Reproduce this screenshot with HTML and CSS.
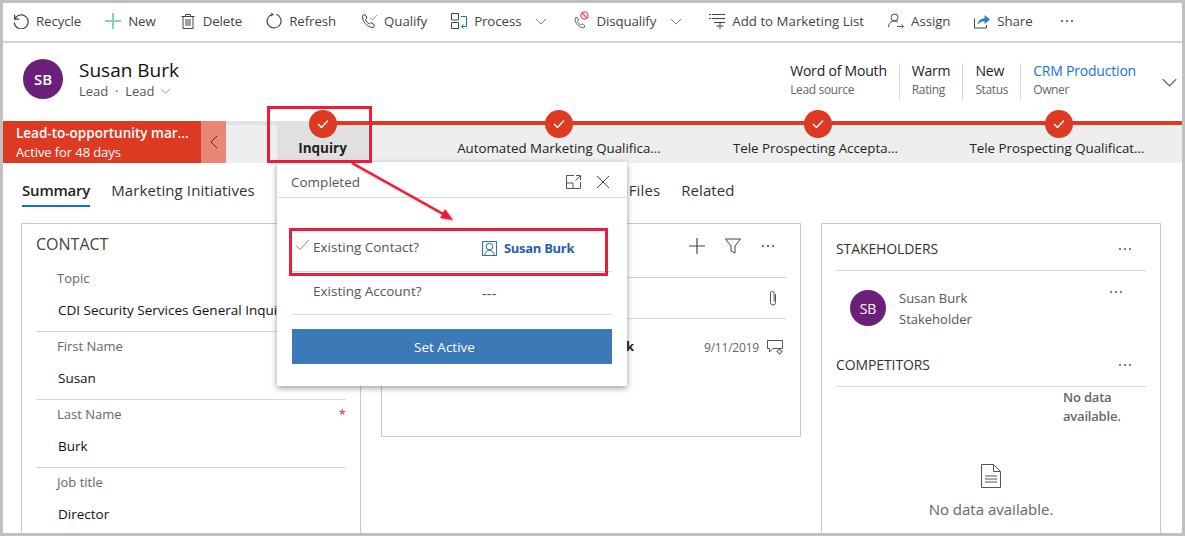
FILE: index.html
```html
<!DOCTYPE html>
<html lang="en">
<head>
    <meta charset="UTF-8">
    <meta name="viewport" content="width=device-width, initial-scale=1.0">
    <title>Susan Burk - Lead</title>
    <link rel="stylesheet" href="styles.css">
</head>
<body>
    <svg class="sprite" aria-hidden="true">
        <symbol id="chevron" viewBox="0 0 14 8"><path d="M1 1l6 6 6-6" fill="none" stroke="currentColor"/></symbol>
        <symbol id="dots" viewBox="0 0 14 4"><g fill="currentColor"><circle cx="2" cy="2" r="1"/><circle cx="7" cy="2" r="1"/><circle cx="12" cy="2" r="1"/></g></symbol>
        <symbol id="check" viewBox="0 0 12 10"><path d="M1 5l3.5 3.5L11 1.5" fill="none" stroke="currentColor" stroke-width="1.4"/></symbol>
        <symbol id="phone" viewBox="0 0 16 16"><path d="M2.5 2.5L5 1.5l2 3.5-1.5 1.5c.6 2 2 3.5 4 4.5L11 9.5l3.5 2.5-1 2.5C8 15 2 9 2.5 2.5z" fill="none" stroke="#444"/></symbol>
    </svg>

    <div class="frame">
        <!-- Command bar -->
        <div class="toolbar">
            <div class="tool"><svg class="icon" viewBox="0 0 16 16" fill="none" stroke="#444" stroke-width="1.2"><path d="M1.6 1.6v4.6h4.6M1.8 6A7 7 0 1 1 1.2 9.5"/></svg>Recycle</div>
            <div class="tool"><svg class="icon" viewBox="0 0 16 16" fill="none" stroke="#8ed1a6" stroke-width="2"><path d="M8 0v16M0 8h16"/></svg>New</div>
            <div class="tool"><svg class="icon" viewBox="0 0 16 16" fill="none" stroke="#444"><path d="M1.5 3.5h13M5.5 3.5V1.5h5v2M3 3.5v12h10v-12M6 6v7M8 6v7M10 6v7"/></svg>Delete</div>
            <div class="tool"><svg class="icon" viewBox="0 0 16 16" fill="none" stroke="#444" stroke-width="1.2"><path d="M10.2 1.3A7 7 0 1 1 5 1.7M5.2 0l1.6 1.6-2.2 1.4"/></svg>Refresh</div>
            <div class="tool tool-qualify">
                <span class="icon-stack"><svg class="icon" viewBox="0 0 16 16"><use href="#phone"/></svg><svg class="badge-check" viewBox="0 0 12 10"><use href="#check"/></svg></span>Qualify
            </div>
            <div class="tool tool-menu">
                <svg class="icon" viewBox="0 0 16 16" fill="none"><path d="M.5.5h7v6.5h-7zM.5 9.500h7v6h-7z" stroke="#444"/><path d="M10 3.500h5.500v10H10.500M12.500 11.500l-2 2 2 2" stroke="#1f6fb5"/></svg>Process
            </div>
            <svg class="caret" viewBox="0 0 14 8"><use href="#chevron"/></svg>
            <div class="tool tool-menu tool-after-caret">
                <span class="icon-stack"><svg class="icon icon-phone-small" viewBox="0 0 16 16"><use href="#phone"/></svg><svg class="badge-no" viewBox="0 0 10 10" fill="none" stroke="#e0555f" stroke-width="1.5"><circle cx="5" cy="5" r="4"/><path d="M2 2l6 6"/></svg></span>Disqualify
            </div>
            <svg class="caret" viewBox="0 0 14 8"><use href="#chevron"/></svg>
            <div class="tool tool-after-caret tool-list"><svg class="icon" viewBox="0 0 16 16" fill="none" stroke="#444"><path d="M0 1.500h2M3 1.500h13M0 5.500h2M3 5.500h13M5 9.500h11M11 9v7M7.500 13h7"/></svg>Add to Marketing List</div>
            <div class="tool"><svg class="icon" viewBox="0 0 16 16" fill="none"><circle cx="6.500" cy="4.500" r="3.500" stroke="#444"/><path d="M.5 14c0-3.500 2.500-6 6-6 1.500 0 2.500.4 3.500 1.200" stroke="#444"/><path d="M9 13.500h6.500M13.500 11.500l2 2-2 2" stroke="#1f6fb5"/></svg>Assign</div>
            <div class="tool"><svg class="icon" viewBox="0 0 16 16"><path d="M.5 5.500v9.500h12v-3" fill="none" stroke="#444"/><path d="M3.500 12c.5-4 3-6.500 7-6.500V2L16 6.500 10.500 11V8.300C7.500 8.300 5.500 9.500 3.500 12z" fill="#2f7fc6"/></svg>Share</div>
            <svg class="tool-dots" viewBox="0 0 14 4"><use href="#dots"/></svg>
        </div>

        <!-- Record header -->
        <div class="record-header">
            <div class="avatar avatar-large">SB</div>
            <div class="record-title">
                <h1>Susan Burk</h1>
                <p>Lead &nbsp;&middot;&nbsp; Lead <svg class="title-caret" viewBox="0 0 14 8"><use href="#chevron"/></svg></p>
            </div>
            <div class="summary">
                <div class="summary-item"><strong>Word of Mouth</strong><span>Lead source</span></div>
                <div class="summary-item"><strong>Warm</strong><span>Rating</span></div>
                <div class="summary-item"><strong>New</strong><span>Status</span></div>
                <div class="summary-item"><strong class="link">CRM Production</strong><span>Owner</span></div>
            </div>
            <svg class="header-caret" viewBox="0 0 14 8"><use href="#chevron"/></svg>
        </div>

        <!-- Business process flow -->
        <div class="process">
            <div class="process-name">
                <strong>Lead-to-opportunity mar...</strong>
                <span>Active for 48 days</span>
            </div>
            <div class="process-toggle"><svg viewBox="0 0 8 14" fill="none" stroke="#333"><path d="M7 1L1 7l6 6"/></svg></div>
            <div class="stages">
                <div class="stage stage-active">
                    <div class="stage-dot"><svg viewBox="0 0 12 10"><use href="#check"/></svg></div>
                    <div class="stage-label">Inquiry</div>
                </div>
                <div class="stage stage-second">
                    <div class="stage-dot"><svg viewBox="0 0 12 10"><use href="#check"/></svg></div>
                    <div class="stage-label">Automated Marketing Qualifica...</div>
                </div>
                <div class="stage stage-third">
                    <div class="stage-dot"><svg viewBox="0 0 12 10"><use href="#check"/></svg></div>
                    <div class="stage-label">Tele Prospecting Accepta...</div>
                </div>
                <div class="stage stage-fourth">
                    <div class="stage-dot"><svg viewBox="0 0 12 10"><use href="#check"/></svg></div>
                    <div class="stage-label">Tele Prospecting Qualificat...</div>
                </div>
            </div>
        </div>

        <!-- Tabs -->
        <div class="tabs">
            <div class="tab tab-active">Summary</div>
            <div class="tab">Marketing Initiatives</div>
            <div class="tab tab-files">Files</div>
            <div class="tab">Related</div>
        </div>

        <div class="content">
            <div class="card card-contact">
                <h2>CONTACT</h2>
                <div class="field"><label>Topic</label><div class="value">CDI Security Services General Inquiry</div></div>
                <div class="field"><label>First Name</label><div class="value">Susan</div></div>
                <div class="field"><label>Last Name <span class="required">*</span></label><div class="value">Burk</div></div>
                <div class="field"><label>Job title</label><div class="value">Director</div></div>
            </div>

            <div class="card card-timeline">
                <div class="timeline-head">
                    <svg class="timeline-plus" viewBox="0 0 16 16" fill="none" stroke="#444" stroke-width="1.2"><path d="M8 0v16M0 8h16"/></svg>
                    <svg class="timeline-filter" viewBox="0 0 16 16" fill="none" stroke="#444"><path d="M.5 1h15L10 8v7l-4-2V8z"/></svg>
                    <svg class="timeline-dots" viewBox="0 0 14 4"><use href="#dots"/></svg>
                </div>
                <div class="timeline-note">
                    <svg class="clip" viewBox="0 0 10 16" fill="none" stroke="#555"><path d="M7.500 4v8.500a2.500 2.500 0 0 1-5 0V3a1.800 1.800 0 0 1 3.600 0v8.500"/></svg>
                </div>
                <div class="timeline-row">
                    <span class="timeline-name">Susan Burk</span>
                    <span class="timeline-date">9/11/2019</span>
                    <svg class="comment" viewBox="0 0 16 15" fill="none" stroke="#555"><path d="M.5.500h15v8H6L2.500 12V8.500H.5z"/><circle cx="12.500" cy="11.500" r="2" fill="#fff"/><path d="M12.500 8.500v1M12.500 13.500v1M9.500 11.500h1M14.500 11.500h1"/></svg>
                </div>
            </div>

            <div class="card card-side">
                <div class="side-head"><h3>STAKEHOLDERS</h3><svg class="side-dots" viewBox="0 0 14 4"><use href="#dots"/></svg></div>
                <div class="person">
                    <div class="avatar avatar-small">SB</div>
                    <div class="person-text"><div>Susan Burk</div><div>Stakeholder</div></div>
                    <svg class="person-dots" viewBox="0 0 14 4"><use href="#dots"/></svg>
                </div>
                <div class="side-head side-head-second"><h3>COMPETITORS</h3><svg class="side-dots" viewBox="0 0 14 4"><use href="#dots"/></svg></div>
                <div class="no-data-small">No data available.</div>
                <div class="no-data">
                    <svg viewBox="0 0 20 24" fill="none" stroke="#555"><path d="M.5.5h12l7 7v16H.5zM12.500.5v7h7M4 12h12M4 15h12M4 18h12"/></svg>
                    <div>No data available.</div>
                </div>
            </div>
        </div>

        <!-- Stage flyout -->
        <div class="flyout">
            <div class="flyout-head">
                <span>Completed</span>
                <svg class="flyout-expand" viewBox="0 0 15 14" fill="none" stroke="#555"><path d="M8 .5H.5v13h14V7M.5 8h6.500v5.500M9.500 5.500L14 1M10 .5h4.500V5"/></svg>
                <svg class="flyout-close" viewBox="0 0 14 14" fill="none" stroke="#444"><path d="M1 1l12 12M13 1L1 13"/></svg>
            </div>
            <div class="flyout-body">
                <div class="step">
                    <svg class="step-check" viewBox="0 0 15 12" fill="none" stroke="#5aa54b"><path d="M1 6.500l4 4L14 1"/></svg>
                    <span class="step-label">Existing Contact?</span>
                    <span class="step-value step-link"><svg viewBox="0 0 16 16" fill="none" stroke="#1f5fae"><path d="M.5.500h15v15H.5z"/><circle cx="8" cy="6" r="3.500"/><path d="M3 15.500c0-3.500 2-5.500 5-5.500s5 2 5 5.500"/></svg>Susan Burk</span>
                </div>
                <div class="step">
                    <span></span>
                    <span class="step-label">Existing Account?</span>
                    <span class="step-value step-empty">---</span>
                </div>
                <button class="set-active" type="button">Set Active</button>
            </div>
            <div class="callout-field"></div>
        </div>

        <!-- Annotations drawn on top of the screenshot -->
        <div class="callout-stage"></div>
        <svg class="callout-arrow" viewBox="0 0 1179 530" fill="none">
            <path d="M349 160L442 212" stroke="#ee1c3c" stroke-width="2.500"/>
            <path d="M450 217L437 215L442 206z" fill="#ee1c3c"/>
        </svg>
    </div>
</body>
</html>
```

FILE: styles.css
```css
* {
    box-sizing: border-box;
}

body {
    margin: 0;
    font-family: "Open Sans", Arial, sans-serif;
    font-size: 13px;
    color: #222;
    background-color: #fff;
}

.sprite {
    display: none;
}

.frame {
    position: relative;
    width: 1185px;
    height: 536px;
    border: 3px solid #c0c0c0;
    overflow: hidden;
    background-color: #fff;
}

/* Command bar */
.toolbar {
    display: flex;
    align-items: center;
    gap: 24px;
    height: 40px;
    padding-left: 10px;
    padding-bottom: 2px;
    border-bottom: 2px solid #d4d4d4;
    color: #444;
    font-size: 13.3px;
    letter-spacing: -0.1px;
    white-space: nowrap;
}

.tool {
    display: flex;
    align-items: center;
    gap: 7px;
}

.tool-qualify .icon-stack {
    margin-right: 1px;
}

.tool-menu {
    margin-right: -10px;
}

.tool-after-caret {
    margin-left: 2px;
}

.tool-list {
    margin-left: 3px;
    letter-spacing: 0;
}

.icon {
    width: 16px;
    height: 16px;
    flex: none;
}

.icon-stack {
    position: relative;
    display: block;
    width: 16px;
    height: 16px;
}

.icon-phone-small {
    width: 13px;
    height: 13px;
    margin-top: 3px;
}

.badge-check {
    position: absolute;
    top: 1px;
    right: -2px;
    width: 9px;
    height: 7px;
    color: #52b788;
}

.badge-no {
    position: absolute;
    top: -2px;
    right: 0;
    width: 9px;
    height: 9px;
    background-color: #fff;
    border-radius: 50%;
}

.caret {
    width: 12px;
    height: 7px;
    color: #666;
}

.tool-dots {
    width: 14px;
    height: 4px;
    margin-left: 3px;
    color: #444;
}

/* Record header */
.record-header {
    display: flex;
    height: 78px;
    padding: 16px 0 0 20px;
}

.avatar {
    display: flex;
    align-items: center;
    justify-content: center;
    flex: none;
    border-radius: 50%;
    background-color: #6b1f7b;
    color: #fff;
    font-weight: 600;
}

.avatar-large {
    width: 40px;
    height: 40px;
    font-size: 15px;
}

.avatar-small {
    width: 36px;
    height: 36px;
    font-size: 14px;
    font-weight: 400;
}

.record-title {
    margin-left: 16px;
}

.record-title h1 {
    margin: 0;
    font-size: 19px;
    font-weight: 400;
    line-height: 22px;
    color: #111;
}

.record-title p {
    margin: 0;
    line-height: 20px;
    color: #555;
}

.title-caret {
    width: 11px;
    height: 6px;
    margin-left: 2px;
    vertical-align: 2px;
    color: #666;
}

.summary {
    display: flex;
    height: 37px;
    margin-top: 4px;
    margin-left: auto;
}

.summary-item {
    display: flex;
    flex-direction: column;
    padding: 0 12px;
    border-left: 1px solid #d8d8d8;
}

.summary-item:first-child {
    border-left: none;
}

.summary-item strong {
    font-size: 14px;
    font-weight: 500;
    line-height: 18px;
    margin-top: -1px;
    color: #222;
    letter-spacing: -0.2px;
}

.summary-item strong.link {
    color: #1673e6;
}

.summary-item span {
    font-size: 12px;
    line-height: 20px;
    color: #666;
    letter-spacing: -0.35px;
}

.header-caret {
    width: 17px;
    height: 9px;
    margin: 19px 4px 0 13px;
    color: #555;
}

/* Business process flow */
.process {
    display: flex;
    height: 42px;
}

.process-name {
    display: flex;
    flex-direction: column;
    width: 198px;
    padding: 2px 0 0 13px;
    background-color: #dd3a24;
    color: #fff;
    white-space: nowrap;
}

.process-name strong {
    font-size: 13.5px;
    line-height: 20px;
    font-weight: 600;
}

.process-name span {
    line-height: 18px;
    letter-spacing: -0.1px;
}

.process-toggle {
    display: flex;
    align-items: center;
    justify-content: center;
    width: 25px;
    background-color: #ea8675;
}

.process-toggle svg {
    width: 8px;
    height: 14px;
}

.stages {
    position: relative;
    display: flex;
    flex: 1;
    padding-left: 51px;
    border-top: 4px solid #e2e2e2;
    background-color: #eee;
}

.stages::before {
    content: "";
    position: absolute;
    top: -4px;
    left: 96px;
    right: 0;
    height: 4px;
    background-color: #dd3a24;
}

.stage {
    display: flex;
    flex-direction: column;
    align-items: center;
    width: 240px;
    font-size: 13.3px;
    white-space: nowrap;
}

.stage-active {
    width: 91px;
    background-color: #e0e0e0;
    font-size: 13.5px;
    font-weight: 700;
    color: #222;
}

.stage-second {
    margin-left: 71px;
}

.stage-third {
    margin-left: 19px;
}

.stage-third .stage-label {
    margin-left: -5px;
}

.stage-fourth {
    margin-left: 1px;
}

.stage-fourth .stage-label {
    margin-left: -4px;
}

.stage-dot {
    position: relative;
    display: flex;
    align-items: center;
    justify-content: center;
    flex: none;
    width: 28px;
    height: 28px;
    margin-top: -15px;
    border-radius: 50%;
    background-color: #dd3a24;
    color: #fff;
}

.stage-dot svg {
    width: 12px;
    height: 10px;
}

.stage-label {
    line-height: 20px;
}

/* Tabs */
.tabs {
    display: flex;
    gap: 21px;
    height: 60px;
    padding: 16px 0 0 19px;
    font-size: 15px;
    color: #333;
}

.tab {
    height: 28px;
    line-height: 22px;
    letter-spacing: 0.1px;
}

.tab-active {
    border-bottom: 2px solid #0f6fde;
    font-weight: 600;
    color: #222;
    letter-spacing: -0.2px;
}

.tab-files {
    margin-left: 353px;
}

/* Cards */
.content {
    display: flex;
    align-items: flex-start;
    gap: 20px;
    padding-left: 18px;
}

.card {
    flex: none;
    border: 1px solid #c8c8c8;
    padding: 0 14px;
    background-color: #fff;
}

.card-contact {
    width: 340px;
    height: 330px;
}

.card-contact h2 {
    margin: 0;
    padding: 9px 0;
    font-size: 16px;
    font-weight: 400;
    line-height: 22px;
    color: #444;
}

.field {
    position: relative;
    padding-left: 21px;
    border-bottom: 1px solid #d8d8d8;
    height: 68px;
}

.field label {
    display: block;
    height: 28px;
    line-height: 28px;
    color: #666;
}

.required {
    position: absolute;
    top: 0;
    right: 0;
    color: #e0203a;
}

.value {
    height: 36px;
    padding-left: 1px;
    line-height: 36px;
    font-size: 13.5px;
    font-weight: 500;
    color: #111;
    white-space: nowrap;
}

.card-timeline {
    width: 420px;
    height: 214px;
}

.timeline-head {
    position: relative;
    display: flex;
    align-items: center;
    justify-content: flex-end;
    height: 54px;
    border-bottom: 1px solid #d0d0d0;
    padding-bottom: 10px;
}

.timeline-plus {
    width: 16px;
    height: 16px;
    margin-right: 20px;
}

.timeline-filter {
    width: 16px;
    height: 16px;
    margin-right: 20px;
}

.timeline-dots {
    width: 14px;
    height: 4px;
    margin-right: 11px;
    color: #444;
}

.timeline-note {
    display: flex;
    align-items: center;
    justify-content: flex-end;
    height: 41px;
    padding-right: 8px;
    border-bottom: 1px solid #d8d8d8;
}

.clip {
    width: 10px;
    height: 16px;
}

.timeline-row {
    display: flex;
    align-items: center;
    height: 56px;
    padding-left: 165px;
}

.timeline-name {
    margin-top: -2px;
    font-weight: 700;
}

.timeline-date {
    margin-left: auto;
    font-size: 12px;
    color: #666;
    letter-spacing: -0.2px;
}

.comment {
    width: 16px;
    height: 15px;
    margin: 0 3px 0 8px;
}

.card-side {
    width: 340px;
    height: 330px;
}

.side-head {
    display: flex;
    align-items: center;
    justify-content: space-between;
    height: 47px;
    padding: 3px 14px 0 0;
    border-bottom: 1px solid #d8d8d8;
}

.side-head-second {
    height: 44px;
    padding-top: 0;
}

.side-head h3 {
    margin: 0;
    font-size: 14px;
    font-weight: 500;
    color: #333;
    letter-spacing: -0.1px;
}

.side-dots {
    width: 14px;
    height: 4px;
    color: #555;
}

.person {
    position: relative;
    display: flex;
    height: 72px;
    padding: 19px 0 0 14px;
}

.person-text {
    margin: -2px 0 0 13px;
    line-height: 21px;
    color: #555;
}

.person-dots {
    position: absolute;
    top: 19px;
    right: 23px;
    width: 14px;
    height: 4px;
    color: #555;
}

.no-data-small {
    width: 70px;
    margin: 1px 0 0 227px;
    line-height: 19px;
    font-weight: 600;
    color: #666;
    letter-spacing: -0.2px;
}

.no-data {
    display: flex;
    flex-direction: column;
    align-items: center;
    margin-top: 38px;
    font-size: 15px;
    color: #666;
}

.no-data svg {
    width: 20px;
    height: 24px;
    margin-bottom: 11px;
}

/* Stage flyout */
.flyout {
    position: absolute;
    top: 159px;
    left: 274px;
    width: 350px;
    height: 224px;
    background-color: #fff;
    box-shadow: 0 2px 6px rgba(0, 0, 0, 0.4);
}

.flyout-head {
    display: flex;
    align-items: center;
    height: 36px;
    margin: 0 1px;
    padding: 4px 16px 0 13px;
    border-bottom: 1px solid #d8d8d8;
    color: #555;
    font-size: 13.5px;
}

.flyout-expand {
    width: 15px;
    height: 14px;
    margin-left: auto;
}

.flyout-close {
    width: 14px;
    height: 14px;
    margin-left: 15px;
}

.flyout-body {
    padding: 30px 15px 0;
}

.step {
    display: grid;
    grid-template-columns: 21px 169px 1fr;
    height: 44px;
    padding-top: 8px;
    border-bottom: 1px solid #d8d8d8;
    line-height: 22px;
}

.step + .step {
    height: 43px;
}

.step-check {
    width: 15px;
    height: 12px;
    margin: 3px 0 0 3px;
}

.step-label {
    font-size: 13.5px;
    color: #555;
}

.step-value {
    display: flex;
    align-items: center;
    height: 24px;
    color: #555;
}

.step-empty {
    padding-top: 2px;
    font-size: 15px;
}

.step-link {
    gap: 7px;
    font-weight: 700;
    color: #1f5fae;
    letter-spacing: -0.3px;
}

.step-link svg {
    width: 15px;
    height: 15px;
}

.set-active {
    display: block;
    width: 100%;
    height: 35px;
    margin-top: 14px;
    padding-right: 21px;
    border: none;
    background-color: #3b79b7;
    color: #fff;
    font-family: inherit;
    font-size: 13.5px;
    cursor: pointer;
}

/* Red annotations */
.callout-stage {
    position: absolute;
    top: 103px;
    left: 264px;
    width: 105px;
    height: 57px;
    border: 3px solid #ee1c3c;
}

.callout-field {
    position: absolute;
    top: 66px;
    left: 12px;
    width: 319px;
    height: 48px;
    border: 3px solid #ee1c3c;
}

.callout-arrow {
    position: absolute;
    top: 0;
    left: 0;
    width: 1179px;
    height: 530px;
    filter: drop-shadow(1px 1px 1px rgba(0, 0, 0, 0.3));
    pointer-events: none;
}
```
